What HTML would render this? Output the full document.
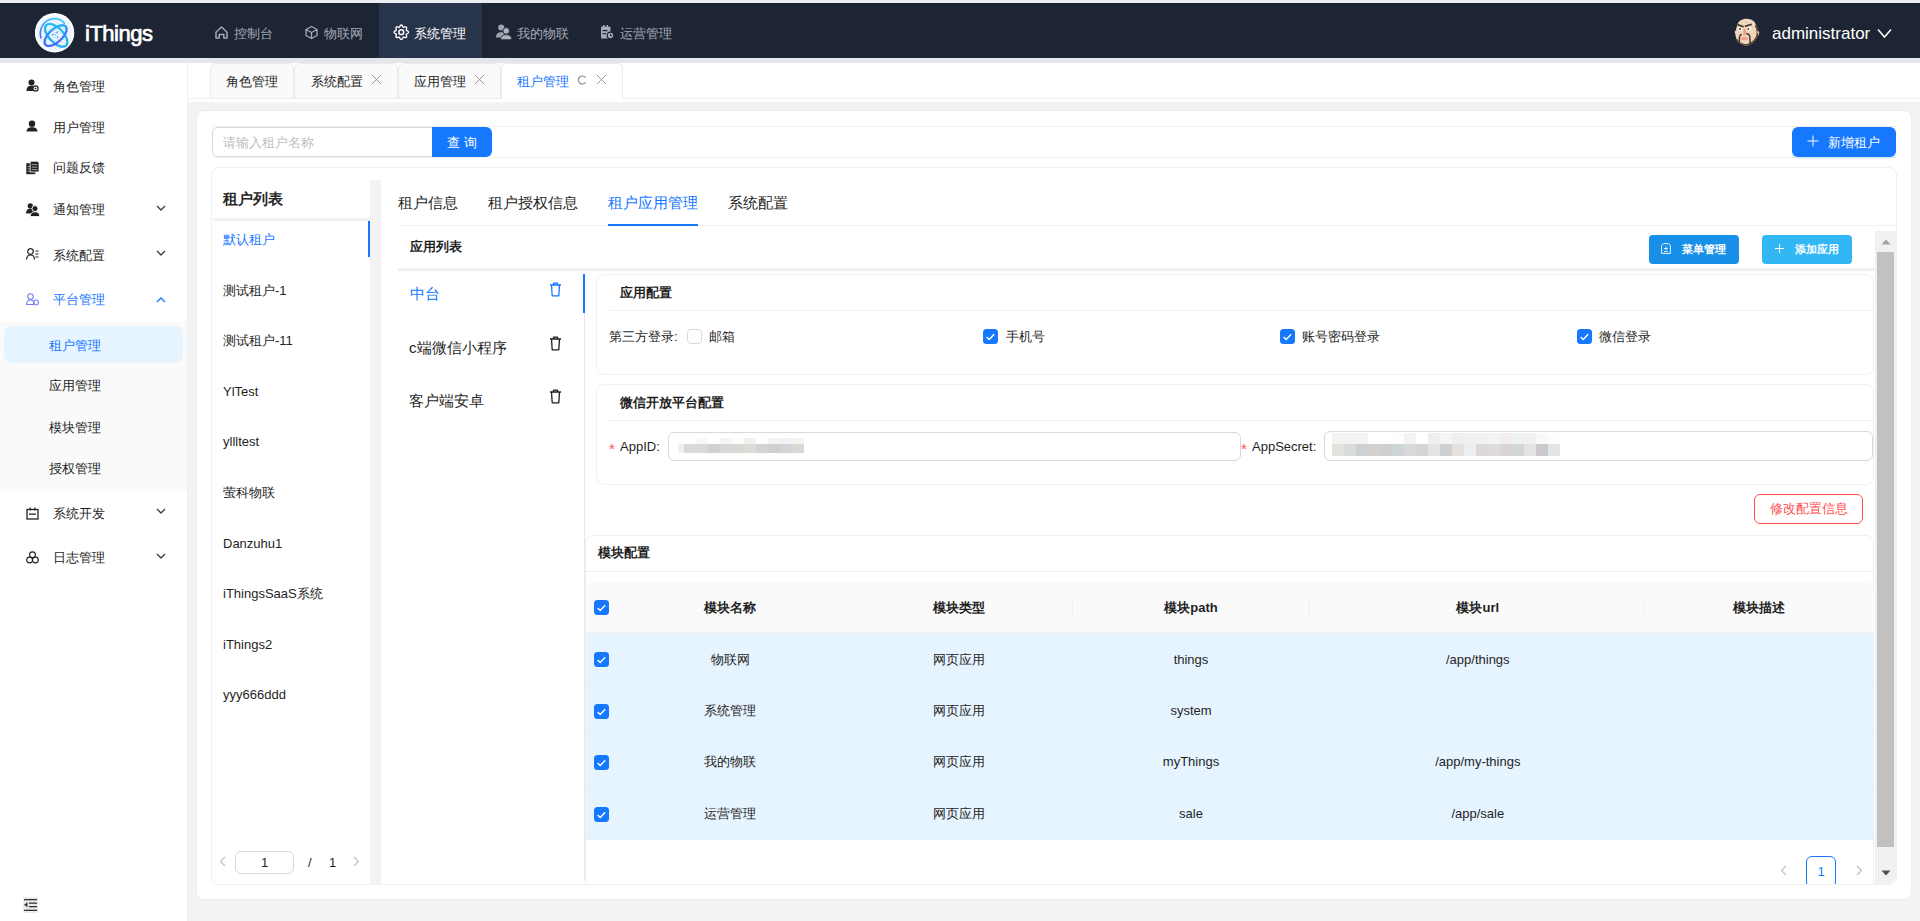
<!DOCTYPE html>
<html><head><meta charset="utf-8">
<style>
*{box-sizing:border-box;margin:0;padding:0}
html,body{width:1920px;height:921px;overflow:hidden}
body{position:relative;background:#f3f3f3;font-family:"Liberation Sans",sans-serif;font-size:13px;color:#1f1f1f}
.a{position:absolute}
.t{position:absolute;white-space:nowrap;line-height:1}
svg{display:block}
</style></head><body>
<div class="a" style="left:0px;top:0px;width:1920px;height:3px;background:#eceef1"></div>
<div class="a" style="left:0px;top:3px;width:1920px;height:55px;background:#1d2433"></div>
<div class="a" style="left:379px;top:3px;width:103px;height:55px;background:#28344a"></div>
<svg class="a" style="left:35px;top:13px" width="40" height="40" viewBox="0 0 40 40"><defs><linearGradient id="lgA" x1="0" y1="0" x2="1" y2="1"><stop offset="0" stop-color="#22c4f6"/><stop offset="1" stop-color="#1aa8f0"/></linearGradient>
<linearGradient id="lgB" x1="0" y1="1" x2="1" y2="0"><stop offset="0" stop-color="#4b55ff"/><stop offset="0.6" stop-color="#2f8bff"/><stop offset="1" stop-color="#1cc2f5"/></linearGradient>
<linearGradient id="lgC" x1="0" y1="1" x2="0.7" y2="0"><stop offset="0" stop-color="#5a5cf8"/><stop offset="1" stop-color="#2ec8f7"/></linearGradient>
<pattern id="hatch" width="40" height="2.4" patternUnits="userSpaceOnUse" patternTransform="rotate(28)"><rect width="40" height="1.1" fill="#b9d5f3"/></pattern>
<radialGradient id="rm"><stop offset="0" stop-color="#fff" stop-opacity="1"/><stop offset="0.85" stop-color="#fff" stop-opacity="0.6"/><stop offset="1" stop-color="#fff" stop-opacity="0"/></radialGradient>
<mask id="mk"><circle cx="19.6" cy="19.8" r="19" fill="url(#rm)"/></mask></defs>
<circle cx="19.6" cy="19.8" r="19.7" fill="#fff"/>
<circle cx="19.6" cy="19.8" r="19" fill="url(#hatch)" mask="url(#mk)" opacity="1"/>
<path d="M6 25 C3.5 17 8 7 18.5 5.8 C23.5 5.3 27.5 7.5 29.5 10.5" fill="none" stroke="url(#lgC)" stroke-width="1.5" stroke-linecap="round"/>
<ellipse cx="21.2" cy="22.3" rx="14.2" ry="7.2" fill="none" stroke="url(#lgA)" stroke-width="2.3" transform="rotate(46 21.2 22.3)"/>
<ellipse cx="20.6" cy="22.6" rx="13.6" ry="6.6" fill="none" stroke="url(#lgB)" stroke-width="2.3" transform="rotate(-42 20.6 22.6)"/>
<circle cx="17.8" cy="21.6" r="0.9" fill="#2fb0f5"/><circle cx="22.2" cy="19.4" r="0.9" fill="#2fb0f5"/><circle cx="22.6" cy="23.8" r="0.9" fill="#2fb0f5"/><circle cx="20.3" cy="22" r="0.8" fill="#5ac0f5"/></svg>
<div class="t" style="left:85px;top:23px;font-size:22px;font-weight:normal;color:#fff;letter-spacing:-0.5px;-webkit-text-stroke:0.7px #fff">iThings</div>
<svg class="a" style="left:214px;top:25px" width="15" height="15" viewBox="0 0 15 15"><path d="M2 7.2 L7.5 2 L13 7.2 V13 H9.8 V9.5 H5.2 V13 H2 Z" fill="none" stroke="#a3aab6" stroke-width="1.5" stroke-linejoin="round"/></svg>
<div class="t" style="left:234px;top:26.5px;font-size:13px;color:#a3aab6;font-weight:normal;">控制台</div>
<svg class="a" style="left:304px;top:25px" width="15" height="15" viewBox="0 0 15 15"><path d="M7.5 1.5 L13 4.5 V10.5 L7.5 13.5 L2 10.5 V4.5 Z M2 4.5 L7.5 7.5 L13 4.5 M7.5 7.5 V13.5" fill="none" stroke="#a3aab6" stroke-width="1.3" stroke-linejoin="round"/></svg>
<div class="t" style="left:324px;top:26.5px;font-size:13px;color:#a3aab6;font-weight:normal;">物联网</div>
<svg class="a" style="left:393px;top:24px" width="17" height="17" viewBox="0 0 17 17"><path d="M15.50 8.20 L15.45 8.48 L15.31 8.75 L15.08 9.00 L14.80 9.23 L14.48 9.43 L14.16 9.61 L13.85 9.77 L13.60 9.92 L13.41 10.08 L13.29 10.27 L13.24 10.48 L13.26 10.73 L13.34 11.02 L13.43 11.35 L13.54 11.70 L13.62 12.07 L13.66 12.43 L13.64 12.76 L13.55 13.06 L13.39 13.29 L13.16 13.45 L12.86 13.54 L12.53 13.56 L12.17 13.52 L11.80 13.44 L11.45 13.33 L11.12 13.24 L10.83 13.16 L10.58 13.14 L10.37 13.19 L10.18 13.31 L10.02 13.50 L9.87 13.75 L9.71 14.06 L9.53 14.38 L9.33 14.70 L9.10 14.98 L8.85 15.21 L8.58 15.35 L8.30 15.40 L8.02 15.35 L7.75 15.21 L7.50 14.98 L7.27 14.70 L7.07 14.38 L6.89 14.06 L6.73 13.75 L6.58 13.50 L6.42 13.31 L6.23 13.19 L6.02 13.14 L5.77 13.16 L5.48 13.24 L5.15 13.33 L4.80 13.44 L4.43 13.52 L4.07 13.56 L3.74 13.54 L3.44 13.45 L3.21 13.29 L3.05 13.06 L2.96 12.76 L2.94 12.43 L2.98 12.07 L3.06 11.70 L3.17 11.35 L3.26 11.02 L3.34 10.73 L3.36 10.48 L3.31 10.27 L3.19 10.08 L3.00 9.92 L2.75 9.77 L2.44 9.61 L2.12 9.43 L1.80 9.23 L1.52 9.00 L1.29 8.75 L1.15 8.48 L1.10 8.20 L1.15 7.92 L1.29 7.65 L1.52 7.40 L1.80 7.17 L2.12 6.97 L2.44 6.79 L2.75 6.63 L3.00 6.48 L3.19 6.32 L3.31 6.13 L3.36 5.92 L3.34 5.67 L3.26 5.38 L3.17 5.05 L3.06 4.70 L2.98 4.33 L2.94 3.97 L2.96 3.64 L3.05 3.34 L3.21 3.11 L3.44 2.95 L3.74 2.86 L4.07 2.84 L4.43 2.88 L4.80 2.96 L5.15 3.07 L5.48 3.16 L5.77 3.24 L6.02 3.26 L6.23 3.21 L6.42 3.09 L6.58 2.90 L6.73 2.65 L6.89 2.34 L7.07 2.02 L7.27 1.70 L7.50 1.42 L7.75 1.19 L8.02 1.05 L8.30 1.00 L8.58 1.05 L8.85 1.19 L9.10 1.42 L9.33 1.70 L9.53 2.02 L9.71 2.34 L9.87 2.65 L10.02 2.90 L10.18 3.09 L10.37 3.21 L10.58 3.26 L10.83 3.24 L11.12 3.16 L11.45 3.07 L11.80 2.96 L12.17 2.88 L12.53 2.84 L12.86 2.86 L13.16 2.95 L13.39 3.11 L13.55 3.34 L13.64 3.64 L13.66 3.97 L13.62 4.33 L13.54 4.70 L13.43 5.05 L13.34 5.38 L13.26 5.67 L13.24 5.92 L13.29 6.13 L13.41 6.32 L13.60 6.48 L13.85 6.63 L14.16 6.79 L14.48 6.97 L14.80 7.17 L15.08 7.40 L15.31 7.65 L15.45 7.92 Z" fill="none" stroke="#fff" stroke-width="1.4" stroke-linejoin="round"/><circle cx="8.3" cy="8.2" r="2.4" fill="none" stroke="#fff" stroke-width="1.5"/></svg>
<div class="t" style="left:414px;top:26.5px;font-size:13px;color:#fff;font-weight:normal;">系统管理</div>
<svg class="a" style="left:495px;top:23px" width="17" height="18" viewBox="0 0 17 18"><circle cx="6.2" cy="4.5" r="3" fill="#9ea5b0"/><path d="M1 14.5 C1 10.8 3 9.2 6.2 9.2 C8 9.2 9.2 9.8 9.8 10.8 L9 14.5 Z" fill="#9ea5b0"/><circle cx="11.2" cy="7.9" r="3.3" fill="#aeb4be" stroke="#1d2433" stroke-width="0.9"/><path d="M5.6 16.8 C5.6 13.2 7.8 11.6 11.2 11.6 C14.6 11.6 16.8 13.2 16.8 16.8 Z" fill="#aeb4be" stroke="#1d2433" stroke-width="0.9"/></svg>
<div class="t" style="left:517px;top:26.5px;font-size:13px;color:#a3aab6;font-weight:normal;">我的物联</div>
<svg class="a" style="left:600px;top:24px" width="14" height="16" viewBox="0 0 14 16"><rect x="1" y="2.5" width="9.5" height="12" rx="1" fill="#a3aab6"/><rect x="3" y="1" width="1.5" height="3" fill="#a3aab6"/><rect x="6.5" y="1" width="1.5" height="3" fill="#a3aab6"/><rect x="2.5" y="6" width="5" height="1.2" fill="#1d2433"/><rect x="2.5" y="9" width="3.5" height="1.2" fill="#1d2433"/><circle cx="10.5" cy="11.5" r="3.3" fill="#a3aab6" stroke="#1d2433" stroke-width="1.2"/><path d="M10.5 9.8 V11.7 H12" stroke="#1d2433" stroke-width="1" fill="none"/></svg>
<div class="t" style="left:620px;top:26.5px;font-size:13px;color:#a3aab6;font-weight:normal;">运营管理</div>
<svg class="a" style="left:1730px;top:14px" width="36" height="36" viewBox="0 0 36 36"><path d="M16.4 4.7 C12 4.7 8.5 7 7.8 9.8 C6.8 12 6.3 14 5.9 16.4 C4.6 16.8 4.4 18.6 5.2 19.6 C5.6 22 6 24 6.5 25.6 C8 28 10 29.6 12 30.2 C13.5 31.2 15 31.8 16.4 31.8 C18.5 31.5 20.5 30.6 22 29.5 C24.5 27.5 26.5 25 27.3 22.5 C28.6 21.6 29.6 19.6 29.1 17.8 C28.6 16.8 27.8 16.6 27.2 16.8 C26.8 13.5 26 10.5 24.6 8 C22.6 5.6 19.6 4.7 16.4 4.7 Z" fill="#efd5bb"/>
<path d="M6.3 25.2 C8 28.6 10.5 29.8 12.5 30.3 C14.5 31 16.4 31 18 30.6 C21 30 24.5 27.5 27.3 22" fill="none" stroke="#5a4634" stroke-width="1.7"/>
<path d="M25.2 11.8 C26.8 12.8 27.3 14.5 27.3 16.8 L27.3 23" fill="none" stroke="#5a4634" stroke-width="1.8"/>
<path d="M8.2 10.9 L12.9 12.6 M15.6 12.2 L21.1 10.5" stroke="#4a3a2b" stroke-width="1.8" stroke-linecap="round"/>
<circle cx="10.4" cy="15" r="2.1" fill="#fff"/><circle cx="18.8" cy="15" r="2.1" fill="#fff"/>
<circle cx="10" cy="15" r="1" fill="#4b3b35"/><circle cx="18.4" cy="14.9" r="1" fill="#4b3b35"/>
<path d="M13.4 15 C14 14.5 15.3 14.5 15.8 15.2 L16.4 20.5 C16 21.6 13.8 21.6 13.2 20.5 Z" fill="#ee9f86"/>
<ellipse cx="14.4" cy="24.6" rx="3.3" ry="1.7" fill="#ef9e88"/>
<path d="M11.8 20.2 C10.5 20.6 9.7 21.6 9.5 23 L9.3 28.2 M16.4 19.6 C18.5 19.8 19.6 21 19.8 23 L20.3 31.5" fill="none" stroke="#4a3a2b" stroke-width="1.5"/>
<circle cx="27.2" cy="18.2" r="1" fill="#e9a58e"/></svg>
<div class="t" style="left:1772px;top:25px;font-size:17px;color:#fff">administrator</div>
<svg class="a" style="left:1877px;top:28px" width="15" height="11" viewBox="0 0 15 11"><path d="M1 1.5 L7.5 9 L14 1.5" fill="none" stroke="#fff" stroke-width="1.5"/></svg>
<div class="a" style="left:0px;top:58px;width:1920px;height:5px;background:#e3e6ea"></div>
<div class="a" style="left:0px;top:63px;width:187px;height:858px;background:#fff"></div>
<div class="a" style="left:187px;top:63px;width:1px;height:858px;background:#f0f0f0"></div>
<div class="a" style="left:0px;top:322px;width:187px;height:169px;background:#fafafa"></div>
<div class="a" style="left:4px;top:326px;width:179px;height:37px;background:#e6f4ff;border-radius:8px"></div>
<svg class="a" style="left:26px;top:79px" width="14" height="15" viewBox="0 0 14 15"><circle cx="5.5" cy="3.5" r="3" fill="#222"/><path d="M0.5 12 C0.5 8 2.5 6.8 5.5 6.8 C7 6.8 8 7.2 8.6 7.8 L8 12 Z" fill="#222"/><circle cx="9.5" cy="9.5" r="2.6" fill="#fff" stroke="#222" stroke-width="1.2"/><circle cx="9.5" cy="9.5" r="0.9" fill="#222"/></svg>
<div class="t" style="left:53px;top:79.5px;font-size:13px;color:#1f1f1f;font-weight:normal;">角色管理</div>
<svg class="a" style="left:26px;top:120px" width="14" height="15" viewBox="0 0 14 15"><circle cx="6" cy="3.8" r="3.2" fill="#222"/><path d="M0.5 11.5 C0.8 8 3 7.2 6 7.2 C9 7.2 11.2 8 11.5 11.5 Z" fill="#222"/></svg>
<div class="t" style="left:53px;top:120.5px;font-size:13px;color:#1f1f1f;font-weight:normal;">用户管理</div>
<svg class="a" style="left:26px;top:161px" width="14" height="15" viewBox="0 0 14 15"><rect x="0.3" y="2.2" width="9" height="11" fill="#222"/><rect x="1.5" y="5" width="5" height="0.9" fill="#999"/><rect x="1.5" y="7.5" width="5" height="0.9" fill="#999"/><rect x="1.5" y="10" width="5" height="0.9" fill="#999"/><path d="M4.2 0.2 H11.5 L13 1.7 V11 H4.2 Z" fill="#222" stroke="#fff" stroke-width="0.8"/><rect x="5.8" y="3.2" width="5.5" height="0.9" fill="#aaa"/><rect x="5.8" y="5.7" width="5.5" height="0.9" fill="#aaa"/><rect x="5.8" y="8.2" width="5.5" height="0.9" fill="#aaa"/></svg>
<div class="t" style="left:53px;top:161.3px;font-size:13px;color:#1f1f1f;font-weight:normal;">问题反馈</div>
<svg class="a" style="left:26px;top:203px" width="14" height="15" viewBox="0 0 14 15"><circle cx="4.3" cy="2.9" r="2.6" fill="#222"/><path d="M0 10.5 C0 7 2 5.8 4.3 5.8 C6.5 5.8 8.5 7 8.5 10.5 Z" fill="#222"/><circle cx="9" cy="5.6" r="3" fill="#222" stroke="#fff" stroke-width="0.9"/><path d="M4.3 13.6 C4.3 10 6.5 8.8 9 8.8 C11.5 8.8 13.6 10 13.6 13.6 Z" fill="#222" stroke="#fff" stroke-width="0.9"/></svg>
<div class="t" style="left:53px;top:203.3px;font-size:13px;color:#1f1f1f;font-weight:normal;">通知管理</div>
<svg class="a" style="left:26px;top:248px" width="14" height="15" viewBox="0 0 14 15"><circle cx="4.5" cy="3.5" r="2.8" fill="none" stroke="#222" stroke-width="1.2"/><path d="M0.6 11.5 C0.6 8 2.5 7 4.5 7 C6.5 7 8.4 8 8.4 11.5" fill="none" stroke="#222" stroke-width="1.2"/><path d="M9.5 3 H12.5 M9.5 6 H12.5 M9.5 9 H12.5" stroke="#222" stroke-width="1.1"/></svg>
<div class="t" style="left:53px;top:248.5px;font-size:13px;color:#1f1f1f;font-weight:normal;">系统配置</div>
<svg class="a" style="left:26px;top:293px" width="14" height="15" viewBox="0 0 14 15"><circle cx="4.5" cy="3.5" r="2.8" fill="none" stroke="#7a7cf4" stroke-width="1.1"/><path d="M0.6 11.5 C0.6 8 2.5 7 4.5 7 C6.5 7 8.4 8 8.4 11.5 Z" fill="none" stroke="#7a7cf4" stroke-width="1.1"/><circle cx="10" cy="9.5" r="2.5" fill="none" stroke="#7a7cf4" stroke-width="1.1"/></svg>
<div class="t" style="left:53px;top:293.1px;font-size:13px;color:#1677ff;font-weight:normal;">平台管理</div>
<svg class="a" style="left:155.5px;top:204.8px" width="10" height="6" viewBox="0 0 10 6"><path d="M1 1 L5 5 L9 1" fill="none" stroke="#3a3a3a" stroke-width="1.3"/></svg>
<svg class="a" style="left:155.5px;top:250px" width="10" height="6" viewBox="0 0 10 6"><path d="M1 1 L5 5 L9 1" fill="none" stroke="#3a3a3a" stroke-width="1.3"/></svg>
<svg class="a" style="left:155.5px;top:296.6px" width="10" height="6" viewBox="0 0 10 6"><path d="M1 5 L5 1 L9 5" fill="none" stroke="#1677ff" stroke-width="1.3"/></svg>
<div class="t" style="left:49px;top:338.8px;font-size:13px;color:#1677ff;font-weight:normal;">租户管理</div>
<div class="t" style="left:49px;top:379.1px;font-size:13px;color:#1f1f1f;font-weight:normal;">应用管理</div>
<div class="t" style="left:49px;top:420.6px;font-size:13px;color:#1f1f1f;font-weight:normal;">模块管理</div>
<div class="t" style="left:49px;top:461.5px;font-size:13px;color:#1f1f1f;font-weight:normal;">授权管理</div>
<svg class="a" style="left:26px;top:507px" width="13" height="13" viewBox="0 0 13 13"><rect x="1" y="2.5" width="11" height="9.5" fill="none" stroke="#222" stroke-width="1.3"/><rect x="3.5" y="0.5" width="1.3" height="3" fill="#222"/><rect x="8.2" y="0.5" width="1.3" height="3" fill="#222"/><rect x="3" y="6.5" width="7" height="1.3" fill="#222"/></svg>
<div class="t" style="left:53px;top:506.5px;font-size:13px;color:#1f1f1f;font-weight:normal;">系统开发</div>
<svg class="a" style="left:155.5px;top:508px" width="10" height="6" viewBox="0 0 10 6"><path d="M1 1 L5 5 L9 1" fill="none" stroke="#3a3a3a" stroke-width="1.3"/></svg>
<svg class="a" style="left:26px;top:551px" width="13" height="13" viewBox="0 0 13 13"><circle cx="6.5" cy="3.8" r="2.9" fill="none" stroke="#222" stroke-width="1.1"/><circle cx="3.6" cy="9" r="2.9" fill="none" stroke="#222" stroke-width="1.1"/><circle cx="9.4" cy="9" r="2.9" fill="none" stroke="#222" stroke-width="1.1"/></svg>
<div class="t" style="left:53px;top:551.3px;font-size:13px;color:#1f1f1f;font-weight:normal;">日志管理</div>
<svg class="a" style="left:155.5px;top:552.8px" width="10" height="6" viewBox="0 0 10 6"><path d="M1 1 L5 5 L9 1" fill="none" stroke="#3a3a3a" stroke-width="1.3"/></svg>
<svg class="a" style="left:23px;top:897px" width="15" height="16" viewBox="0 0 15 16"><rect width="15" height="16" fill="#e8eaed"/><rect x="1" y="2" width="13" height="1.3" fill="#333"/><rect x="6" y="5.5" width="8" height="1.3" fill="#333"/><rect x="6" y="9" width="8" height="1.3" fill="#333"/><rect x="1" y="12.7" width="13" height="1.3" fill="#333"/><path d="M1 7.8 L4.5 5.3 V10.3 Z" fill="#333"/></svg>
<div class="a" style="left:188px;top:63px;width:1732px;height:39px;background:#fff"></div>
<div class="a" style="left:188px;top:98px;width:1732px;height:1px;background:#f0f0f0"></div>
<div class="a" style="left:210px;top:63px;width:84px;height:36px;background:#fafafa;border:1px solid #ebebeb;border-radius:6px 6px 0 0;"></div>
<div class="t" style="left:226px;top:74.5px;font-size:13px;color:#1f1f1f;font-weight:normal;">角色管理</div>
<div class="a" style="left:294px;top:63px;width:104px;height:36px;background:#fafafa;border:1px solid #ebebeb;border-radius:6px 6px 0 0;"></div>
<div class="t" style="left:311px;top:74.5px;font-size:13px;color:#1f1f1f;font-weight:normal;">系统配置</div>
<svg class="a" style="left:371px;top:74px" width="11" height="11" viewBox="0 0 11 11"><path d="M0.8 0.8 L10.2 10.2 M10.2 0.8 L0.8 10.2" stroke="#9a9a9a" stroke-width="1"/></svg>
<div class="a" style="left:398px;top:63px;width:103px;height:36px;background:#fafafa;border:1px solid #ebebeb;border-radius:6px 6px 0 0;"></div>
<div class="t" style="left:414px;top:74.5px;font-size:13px;color:#1f1f1f;font-weight:normal;">应用管理</div>
<svg class="a" style="left:474px;top:74px" width="11" height="11" viewBox="0 0 11 11"><path d="M0.8 0.8 L10.2 10.2 M10.2 0.8 L0.8 10.2" stroke="#9a9a9a" stroke-width="1"/></svg>
<div class="a" style="left:501px;top:63px;width:122px;height:36px;background:#fff;border:1px solid #ebebeb;border-radius:6px 6px 0 0;border-bottom-color:#fff;"></div>
<div class="t" style="left:517px;top:74.5px;font-size:13px;color:#1677ff;font-weight:normal;">租户管理</div>
<svg class="a" style="left:596px;top:74px" width="11" height="11" viewBox="0 0 11 11"><path d="M0.8 0.8 L10.2 10.2 M10.2 0.8 L0.8 10.2" stroke="#9a9a9a" stroke-width="1"/></svg>
<svg class="a" style="left:577px;top:75px" width="10" height="10" viewBox="0 0 10 10"><path d="M8.6 2.6 A4 4 0 1 0 8.6 7.4" fill="none" stroke="#8c8c8c" stroke-width="1.2"/></svg>
<div class="a" style="left:196px;top:110px;width:1716px;height:790px;background:#fff;border-radius:8px;border:1px solid #ededed"></div>
<div class="a" style="left:212px;top:126px;width:1684px;height:32px;border-top:1px solid #f0f0f0;border-bottom:1px solid #f0f0f0"></div>
<div class="a" style="left:212px;top:127px;width:221px;height:30px;background:#fff;border:1px solid #d9d9d9;border-radius:6px 0 0 6px"></div>
<div class="t" style="left:223px;top:135.5px;font-size:13px;color:#bfbfbf;font-weight:normal;">请输入租户名称</div>
<div class="a" style="left:432px;top:127px;width:60px;height:30px;background:#1677ff;border-radius:0 6px 6px 0"></div>
<div class="t" style="left:447px;top:135.8px;font-size:13px;color:#fff;font-weight:normal;">查</div>
<div class="t" style="left:464px;top:135.8px;font-size:13px;color:#fff;font-weight:normal;">询</div>
<div class="a" style="left:1792px;top:127px;width:104px;height:30px;background:#1677ff;border-radius:6px;box-shadow:0 2px 0 rgba(5,145,255,0.1)"></div>
<svg class="a" style="left:1807px;top:135px" width="12" height="12" viewBox="0 0 12 12"><path d="M6 0.5 V11.5 M0.5 6 H11.5" stroke="#fff" stroke-width="1"/></svg>
<div class="t" style="left:1828px;top:135.5px;font-size:13px;color:#fff;font-weight:normal;">新增租户</div>
<div class="a" style="left:211px;top:167px;width:1686px;height:718px;border:1px solid #f0f0f0;border-radius:8px"></div>
<div class="t" style="left:223px;top:191.2px;font-size:15px;color:#262626;font-weight:bold;">租户列表</div>
<div class="a" style="left:213px;top:218px;width:157px;height:3px;background:#f0f0f0"></div>
<div class="t" style="left:223px;top:232.9px;font-size:13px;color:#1677ff;font-weight:normal;">默认租户</div>
<div class="t" style="left:223px;top:283.5px;font-size:13px;color:#1f1f1f;font-weight:normal;">测试租户-1</div>
<div class="t" style="left:223px;top:334.1px;font-size:13px;color:#1f1f1f;font-weight:normal;">测试租户-11</div>
<div class="t" style="left:223px;top:384.7px;font-size:13px;color:#1f1f1f;font-weight:normal;">YlTest</div>
<div class="t" style="left:223px;top:435.3px;font-size:13px;color:#1f1f1f;font-weight:normal;">yllltest</div>
<div class="t" style="left:223px;top:485.9px;font-size:13px;color:#1f1f1f;font-weight:normal;">萤科物联</div>
<div class="t" style="left:223px;top:536.5px;font-size:13px;color:#1f1f1f;font-weight:normal;">Danzuhu1</div>
<div class="t" style="left:223px;top:587.1px;font-size:13px;color:#1f1f1f;font-weight:normal;">iThingsSaaS系统</div>
<div class="t" style="left:223px;top:637.7px;font-size:13px;color:#1f1f1f;font-weight:normal;">iThings2</div>
<div class="t" style="left:223px;top:688.3px;font-size:13px;color:#1f1f1f;font-weight:normal;">yyy666ddd</div>
<div class="a" style="left:368px;top:221px;width:2px;height:36px;background:#1677ff"></div>
<div class="a" style="left:370px;top:180px;width:11px;height:704px;background:#f3f3f3"></div>
<svg class="a" style="left:219px;top:856px" width="8" height="11" viewBox="0 0 8 11"><path d="M6 1 L1.5 5.5 L6 10" fill="none" stroke="#bfbfbf" stroke-width="1.1"/></svg>
<div class="a" style="left:235px;top:851px;width:59px;height:23px;border:1px solid #d9d9d9;border-radius:6px"></div>
<div class="t" style="left:114.5px;width:300px;text-align:center;top:855.5px;font-size:13px;color:#1f1f1f;font-weight:normal;">1</div>
<div class="t" style="left:308px;top:855.5px;font-size:13px;color:#1f1f1f;font-weight:normal;">/</div>
<div class="t" style="left:329px;top:855.5px;font-size:13px;color:#1f1f1f;font-weight:normal;">1</div>
<svg class="a" style="left:352px;top:856px" width="8" height="11" viewBox="0 0 8 11"><path d="M2 1 L6.5 5.5 L2 10" fill="none" stroke="#bfbfbf" stroke-width="1.1"/></svg>
<div class="t" style="left:398px;top:195.1px;font-size:15px;color:#1f1f1f;font-weight:normal;">租户信息</div>
<div class="t" style="left:487.5px;top:195.1px;font-size:15px;color:#1f1f1f;font-weight:normal;">租户授权信息</div>
<div class="t" style="left:608px;top:195.1px;font-size:15px;color:#1677ff;font-weight:normal;">租户应用管理</div>
<div class="t" style="left:727.7px;top:195.1px;font-size:15px;color:#1f1f1f;font-weight:normal;">系统配置</div>
<div class="a" style="left:398px;top:225px;width:1498px;height:1px;background:#f0f0f0"></div>
<div class="a" style="left:608px;top:224px;width:90px;height:2px;background:#1677ff"></div>
<div class="a" style="left:398px;top:231px;width:1498px;height:653px;overflow:hidden;border-radius:0 0 8px 0">
<div class="t" style="left:11.5px;top:9.2px;font-size:13px;color:#1f1f1f;font-weight:bold;">应用列表</div>
<div class="a" style="left:1251px;top:4px;width:90px;height:29px;background:#1890e8;border-radius:4px"></div>
<svg class="a" style="left:1263px;top:12px" width="10" height="11" viewBox="0 0 10 11"><path d="M0.6 2.5 L2.5 0.6 H7.5 L9.4 2.5 V10.4 H0.6 Z" fill="none" stroke="#e8f2fc" stroke-width="1"/><path d="M3 5.5 H7 M5 3.5 V7.5 M3 8.6 H7" stroke="#e8f2fc" stroke-width="0.9"/></svg>
<div class="t" style="left:1284px;top:12.5px;font-size:11px;color:#fff;font-weight:bold;">菜单管理</div>
<div class="a" style="left:1364px;top:4px;width:90px;height:29px;background:#33b6f4;border-radius:4px"></div>
<svg class="a" style="left:1377px;top:13px" width="9" height="9" viewBox="0 0 9 9"><path d="M4.5 0 V9 M0 4.5 H9" stroke="#fff" stroke-width="1"/></svg>
<div class="t" style="left:1397px;top:12.5px;font-size:11px;color:#fff;font-weight:bold;">添加应用</div>
<div class="a" style="left:0px;top:37px;width:1477px;height:3px;background:#f0f0f0"></div>
<div class="t" style="left:12px;top:55.2px;font-size:15px;color:#1677ff;font-weight:normal;">中台</div>
<svg class="a" style="left:151px;top:51px" width="13" height="15" viewBox="0 0 13 15"><path d="M1 3 H12 M4.5 3 V1.2 H8.5 V3 M2.5 3 L3.2 13.8 H9.8 L10.5 3" fill="none" stroke="#1677ff" stroke-width="1.3" stroke-linejoin="round"/></svg>
<div class="t" style="left:11px;top:109.2px;font-size:15px;color:#1f1f1f;font-weight:normal;">c端微信小程序</div>
<svg class="a" style="left:151px;top:105px" width="13" height="15" viewBox="0 0 13 15"><path d="M1 3 H12 M4.5 3 V1.2 H8.5 V3 M2.5 3 L3.2 13.8 H9.8 L10.5 3" fill="none" stroke="#1f1f1f" stroke-width="1.3" stroke-linejoin="round"/></svg>
<div class="t" style="left:11px;top:161.5px;font-size:15px;color:#1f1f1f;font-weight:normal;">客户端安卓</div>
<svg class="a" style="left:151px;top:158px" width="13" height="15" viewBox="0 0 13 15"><path d="M1 3 H12 M4.5 3 V1.2 H8.5 V3 M2.5 3 L3.2 13.8 H9.8 L10.5 3" fill="none" stroke="#1f1f1f" stroke-width="1.3" stroke-linejoin="round"/></svg>
<div class="a" style="left:186px;top:43px;width:1px;height:606px;background:#e8e8e8"></div>
<div class="a" style="left:185px;top:43px;width:2px;height:39px;background:#1677ff"></div>
<div class="a" style="left:198px;top:43px;width:1278px;height:101px;border:1px solid #f0f0f0;border-radius:8px"></div>
<div class="t" style="left:222px;top:54.5px;font-size:13px;color:#1f1f1f;font-weight:bold;">应用配置</div>
<div class="a" style="left:211px;top:79px;width:1265px;height:1px;background:#f0f0f0"></div>
<div class="t" style="left:211px;top:98.5px;font-size:13px;color:#1f1f1f;font-weight:normal;">第三方登录:</div>
<svg class="a" style="left:289px;top:98.0px" width="15" height="15" viewBox="0 0 15 15"><rect x="0.5" y="0.5" width="14" height="14" rx="3.5" fill="#fff" stroke="#d9d9d9"/></svg>
<div class="t" style="left:311px;top:98.5px;font-size:13px;color:#1f1f1f;font-weight:normal;">邮箱</div>
<svg class="a" style="left:585px;top:98.0px" width="15" height="15" viewBox="0 0 15 15"><rect x="0" y="0" width="15" height="15" rx="3.5" fill="#1677ff"/><path d="M3.6 7.9 L6.2 10.6 L11.2 5.2" fill="none" stroke="#fff" stroke-width="1.4"/></svg>
<div class="t" style="left:608px;top:98.5px;font-size:13px;color:#1f1f1f;font-weight:normal;">手机号</div>
<svg class="a" style="left:882px;top:98.0px" width="15" height="15" viewBox="0 0 15 15"><rect x="0" y="0" width="15" height="15" rx="3.5" fill="#1677ff"/><path d="M3.6 7.9 L6.2 10.6 L11.2 5.2" fill="none" stroke="#fff" stroke-width="1.4"/></svg>
<div class="t" style="left:904px;top:98.5px;font-size:13px;color:#1f1f1f;font-weight:normal;">账号密码登录</div>
<svg class="a" style="left:1179px;top:98.0px" width="15" height="15" viewBox="0 0 15 15"><rect x="0" y="0" width="15" height="15" rx="3.5" fill="#1677ff"/><path d="M3.6 7.9 L6.2 10.6 L11.2 5.2" fill="none" stroke="#fff" stroke-width="1.4"/></svg>
<div class="t" style="left:1201px;top:98.5px;font-size:13px;color:#1f1f1f;font-weight:normal;">微信登录</div>
<div class="a" style="left:198px;top:153px;width:1278px;height:101px;border:1px solid #f0f0f0;border-radius:8px"></div>
<div class="t" style="left:222px;top:164.5px;font-size:13px;color:#1f1f1f;font-weight:bold;">微信开放平台配置</div>
<div class="a" style="left:211px;top:189px;width:1265px;height:1px;background:#f0f0f0"></div>
<div class="t" style="left:211px;top:209.5px;font-size:15px;color:#ff4d4f;font-weight:normal;">*</div>
<div class="t" style="left:222px;top:208.5px;font-size:13px;color:#1f1f1f;font-weight:normal;">AppID:</div>
<div class="a" style="left:270px;top:201px;width:573px;height:29px;border:1px solid #d9d9d9;border-radius:6px"></div>
<div class="a" style="left:280px;top:207px;width:6px;height:6px;background:#fdfdfd"></div>
<div class="a" style="left:280px;top:213px;width:6px;height:9px;background:#efefef"></div>
<div class="a" style="left:286px;top:207px;width:12px;height:6px;background:#fefefc"></div>
<div class="a" style="left:286px;top:213px;width:12px;height:9px;background:#d8dad9"></div>
<div class="a" style="left:298px;top:207px;width:12px;height:6px;background:#f7f7f7"></div>
<div class="a" style="left:298px;top:213px;width:12px;height:9px;background:#d9d9d9"></div>
<div class="a" style="left:310px;top:207px;width:12px;height:6px;background:#fff"></div>
<div class="a" style="left:310px;top:213px;width:12px;height:9px;background:#d1cfd2"></div>
<div class="a" style="left:322px;top:207px;width:12px;height:6px;background:#f5f5f5"></div>
<div class="a" style="left:322px;top:213px;width:12px;height:9px;background:#d5d7da"></div>
<div class="a" style="left:334px;top:207px;width:12px;height:6px;background:#fafbfa"></div>
<div class="a" style="left:334px;top:213px;width:12px;height:9px;background:#d9d8d6"></div>
<div class="a" style="left:346px;top:207px;width:12px;height:6px;background:#f3f1ee"></div>
<div class="a" style="left:346px;top:213px;width:12px;height:9px;background:#dfdcd7"></div>
<div class="a" style="left:358px;top:207px;width:12px;height:6px;background:#fdfeff"></div>
<div class="a" style="left:358px;top:213px;width:12px;height:9px;background:#d2d3d5"></div>
<div class="a" style="left:370px;top:207px;width:12px;height:6px;background:#f5f5f5"></div>
<div class="a" style="left:370px;top:213px;width:12px;height:9px;background:#cfcfd1"></div>
<div class="a" style="left:382px;top:207px;width:12px;height:6px;background:#f0f2f4"></div>
<div class="a" style="left:382px;top:213px;width:12px;height:9px;background:#d2d4d6"></div>
<div class="a" style="left:394px;top:207px;width:12px;height:6px;background:#f4f3f0"></div>
<div class="a" style="left:394px;top:213px;width:12px;height:9px;background:#d9d8d5"></div>
<div class="t" style="left:843px;top:209.5px;font-size:15px;color:#ff4d4f;font-weight:normal;">*</div>
<div class="t" style="left:854px;top:208.5px;font-size:13px;color:#1f1f1f;font-weight:normal;">AppSecret:</div>
<div class="a" style="left:926px;top:200px;width:549px;height:30px;border:1px solid #d9d9d9;border-radius:6px"></div>
<div class="a" style="left:934px;top:202px;width:12px;height:11px;background:#f3f3f2"></div>
<div class="a" style="left:934px;top:213px;width:12px;height:12px;background:#e2e2de"></div>
<div class="a" style="left:946px;top:202px;width:12px;height:11px;background:#f3f3f1"></div>
<div class="a" style="left:946px;top:213px;width:12px;height:12px;background:#d9dcdb"></div>
<div class="a" style="left:958px;top:202px;width:12px;height:11px;background:#f2f4f6"></div>
<div class="a" style="left:958px;top:213px;width:12px;height:12px;background:#cdd1d3"></div>
<div class="a" style="left:970px;top:202px;width:12px;height:11px;background:#fff"></div>
<div class="a" style="left:970px;top:213px;width:12px;height:12px;background:#d3d1cf"></div>
<div class="a" style="left:982px;top:202px;width:12px;height:11px;background:#fff"></div>
<div class="a" style="left:982px;top:213px;width:12px;height:12px;background:#cfcfcf"></div>
<div class="a" style="left:994px;top:202px;width:12px;height:11px;background:#fefefc"></div>
<div class="a" style="left:994px;top:213px;width:12px;height:12px;background:#cdd5d6"></div>
<div class="a" style="left:1006px;top:202px;width:12px;height:11px;background:#f2f4f3"></div>
<div class="a" style="left:1006px;top:213px;width:12px;height:12px;background:#d9d9d9"></div>
<div class="a" style="left:1018px;top:202px;width:12px;height:11px;background:#fff"></div>
<div class="a" style="left:1018px;top:213px;width:12px;height:12px;background:#d4d4d2"></div>
<div class="a" style="left:1030px;top:202px;width:12px;height:11px;background:#efefef"></div>
<div class="a" style="left:1030px;top:213px;width:12px;height:12px;background:#e6e4e2"></div>
<div class="a" style="left:1042px;top:202px;width:12px;height:11px;background:#f5f5f3"></div>
<div class="a" style="left:1042px;top:213px;width:12px;height:12px;background:#ccd0d2"></div>
<div class="a" style="left:1054px;top:202px;width:12px;height:11px;background:#f1efee"></div>
<div class="a" style="left:1054px;top:213px;width:12px;height:12px;background:#e6e0df"></div>
<div class="a" style="left:1066px;top:202px;width:12px;height:11px;background:#f0f0f0"></div>
<div class="a" style="left:1066px;top:213px;width:12px;height:12px;background:#eceef0"></div>
<div class="a" style="left:1078px;top:202px;width:12px;height:11px;background:#eff2f1"></div>
<div class="a" style="left:1078px;top:213px;width:12px;height:12px;background:#ddd8dc"></div>
<div class="a" style="left:1090px;top:202px;width:12px;height:11px;background:#f4f4f4"></div>
<div class="a" style="left:1090px;top:213px;width:12px;height:12px;background:#dddcda"></div>
<div class="a" style="left:1102px;top:202px;width:12px;height:11px;background:#f2eeef"></div>
<div class="a" style="left:1102px;top:213px;width:12px;height:12px;background:#d9d4d6"></div>
<div class="a" style="left:1114px;top:202px;width:12px;height:11px;background:#eef2f1"></div>
<div class="a" style="left:1114px;top:213px;width:12px;height:12px;background:#d3d6d4"></div>
<div class="a" style="left:1126px;top:202px;width:12px;height:11px;background:#f1f1f1"></div>
<div class="a" style="left:1126px;top:213px;width:12px;height:12px;background:#e3e3e5"></div>
<div class="a" style="left:1138px;top:202px;width:12px;height:11px;background:#f9f9f9"></div>
<div class="a" style="left:1138px;top:213px;width:12px;height:12px;background:#cdc8cc"></div>
<div class="a" style="left:1150px;top:202px;width:12px;height:11px;background:#fcfcfc"></div>
<div class="a" style="left:1150px;top:213px;width:12px;height:12px;background:#e1e5e8"></div>
<div class="a" style="left:1356px;top:263px;width:109px;height:30px;border:1px solid #ff4d4f;border-radius:6px;background:#fff"></div>
<div class="t" style="left:1372px;top:270.8px;font-size:13px;color:#ff4d4f;font-weight:normal;">修改配置信息</div>
<div class="a" style="left:187px;top:304px;width:1289px;height:400px;border:1px solid #f0f0f0;border-radius:8px"></div>
<div class="t" style="left:199.70000000000005px;top:315.1px;font-size:13px;color:#1f1f1f;font-weight:bold;">模块配置</div>
<div class="a" style="left:188px;top:340px;width:1288px;height:1px;background:#f0f0f0"></div>
<div class="a" style="left:188px;top:351px;width:1288px;height:51px;background:#fafafa;border-radius:8px 8px 0 0;border-bottom:1px solid #f0f0f0"></div>
<svg class="a" style="left:196px;top:369.0px" width="15" height="15" viewBox="0 0 15 15"><rect x="0" y="0" width="15" height="15" rx="3.5" fill="#1677ff"/><path d="M3.6 7.9 L6.2 10.6 L11.2 5.2" fill="none" stroke="#fff" stroke-width="1.4"/></svg>
<div class="t" style="left:182px;width:300px;text-align:center;top:369.5px;font-size:13px;color:#1f1f1f;font-weight:bold">模块名称</div>
<div class="t" style="left:410.6px;width:300px;text-align:center;top:369.5px;font-size:13px;color:#1f1f1f;font-weight:bold">模块类型</div>
<div class="t" style="left:643px;width:300px;text-align:center;top:369.5px;font-size:13px;color:#1f1f1f;font-weight:bold">模块path</div>
<div class="t" style="left:929.8px;width:300px;text-align:center;top:369.5px;font-size:13px;color:#1f1f1f;font-weight:bold">模块url</div>
<div class="t" style="left:1211px;width:300px;text-align:center;top:369.5px;font-size:13px;color:#1f1f1f;font-weight:bold">模块描述</div>
<div class="a" style="left:674px;top:366px;width:1px;height:21px;background:#f0f0f0"></div>
<div class="a" style="left:911px;top:366px;width:1px;height:21px;background:#f0f0f0"></div>
<div class="a" style="left:1246px;top:366px;width:1px;height:21px;background:#f0f0f0"></div>
<div class="a" style="left:188px;top:402px;width:1288px;height:52px;background:#e6f4ff;border-bottom:1px solid #e2f0fc"></div>
<svg class="a" style="left:196px;top:421.0px" width="15" height="15" viewBox="0 0 15 15"><rect x="0" y="0" width="15" height="15" rx="3.5" fill="#1677ff"/><path d="M3.6 7.9 L6.2 10.6 L11.2 5.2" fill="none" stroke="#fff" stroke-width="1.4"/></svg>
<div class="t" style="left:182px;width:300px;text-align:center;top:421.5px;font-size:13px;color:#1f1f1f;font-weight:normal">物联网</div>
<div class="t" style="left:410.6px;width:300px;text-align:center;top:421.5px;font-size:13px;color:#1f1f1f;font-weight:normal">网页应用</div>
<div class="t" style="left:643px;width:300px;text-align:center;top:421.5px;font-size:13px;color:#1f1f1f;font-weight:normal">things</div>
<div class="t" style="left:929.8px;width:300px;text-align:center;top:421.5px;font-size:13px;color:#1f1f1f;font-weight:normal">/app/things</div>
<div class="a" style="left:188px;top:454px;width:1288px;height:51px;background:#e6f4ff;border-bottom:1px solid #e2f0fc"></div>
<svg class="a" style="left:196px;top:472.5px" width="15" height="15" viewBox="0 0 15 15"><rect x="0" y="0" width="15" height="15" rx="3.5" fill="#1677ff"/><path d="M3.6 7.9 L6.2 10.6 L11.2 5.2" fill="none" stroke="#fff" stroke-width="1.4"/></svg>
<div class="t" style="left:182px;width:300px;text-align:center;top:473.0px;font-size:13px;color:#1f1f1f;font-weight:normal">系统管理</div>
<div class="t" style="left:410.6px;width:300px;text-align:center;top:473.0px;font-size:13px;color:#1f1f1f;font-weight:normal">网页应用</div>
<div class="t" style="left:643px;width:300px;text-align:center;top:473.0px;font-size:13px;color:#1f1f1f;font-weight:normal">system</div>
<div class="a" style="left:188px;top:505px;width:1288px;height:51px;background:#e6f4ff;border-bottom:1px solid #e2f0fc"></div>
<svg class="a" style="left:196px;top:523.5px" width="15" height="15" viewBox="0 0 15 15"><rect x="0" y="0" width="15" height="15" rx="3.5" fill="#1677ff"/><path d="M3.6 7.9 L6.2 10.6 L11.2 5.2" fill="none" stroke="#fff" stroke-width="1.4"/></svg>
<div class="t" style="left:182px;width:300px;text-align:center;top:524.0px;font-size:13px;color:#1f1f1f;font-weight:normal">我的物联</div>
<div class="t" style="left:410.6px;width:300px;text-align:center;top:524.0px;font-size:13px;color:#1f1f1f;font-weight:normal">网页应用</div>
<div class="t" style="left:643px;width:300px;text-align:center;top:524.0px;font-size:13px;color:#1f1f1f;font-weight:normal">myThings</div>
<div class="t" style="left:929.8px;width:300px;text-align:center;top:524.0px;font-size:13px;color:#1f1f1f;font-weight:normal">/app/my-things</div>
<div class="a" style="left:188px;top:556px;width:1288px;height:53px;background:#e6f4ff;border-bottom:1px solid #e2f0fc"></div>
<svg class="a" style="left:196px;top:575.5px" width="15" height="15" viewBox="0 0 15 15"><rect x="0" y="0" width="15" height="15" rx="3.5" fill="#1677ff"/><path d="M3.6 7.9 L6.2 10.6 L11.2 5.2" fill="none" stroke="#fff" stroke-width="1.4"/></svg>
<div class="t" style="left:182px;width:300px;text-align:center;top:576.0px;font-size:13px;color:#1f1f1f;font-weight:normal">运营管理</div>
<div class="t" style="left:410.6px;width:300px;text-align:center;top:576.0px;font-size:13px;color:#1f1f1f;font-weight:normal">网页应用</div>
<div class="t" style="left:643px;width:300px;text-align:center;top:576.0px;font-size:13px;color:#1f1f1f;font-weight:normal">sale</div>
<div class="t" style="left:929.8px;width:300px;text-align:center;top:576.0px;font-size:13px;color:#1f1f1f;font-weight:normal">/app/sale</div>
<svg class="a" style="left:1382px;top:634px" width="8" height="11" viewBox="0 0 8 11"><path d="M6 1 L1.5 5.5 L6 10" fill="none" stroke="#bfbfbf" stroke-width="1.1"/></svg>
<div class="a" style="left:1408px;top:625px;width:30px;height:32px;border:1px solid #1677ff;border-radius:6px"></div>
<div class="t" style="left:1273px;width:300px;text-align:center;top:633.5px;font-size:13px;color:#1677ff;font-weight:normal">1</div>
<svg class="a" style="left:1457px;top:634px" width="8" height="11" viewBox="0 0 8 11"><path d="M2 1 L6.5 5.5 L2 10" fill="none" stroke="#bfbfbf" stroke-width="1.1"/></svg>
<div class="a" style="left:1477px;top:0px;width:21px;height:653px;background:#f1f1f1"></div>
<div class="a" style="left:1479px;top:21px;width:17px;height:595px;background:#c1c1c1"></div>
<svg class="a" style="left:1483px;top:8px" width="10" height="6" viewBox="0 0 10 6"><path d="M0.5 5.5 L5 0.5 L9.5 5.5 Z" fill="#a3a3a3"/></svg>
<svg class="a" style="left:1483px;top:639px" width="10" height="6" viewBox="0 0 10 6"><path d="M0.5 0.5 L5 5.5 L9.5 0.5 Z" fill="#505050"/></svg>
</div>
</body></html>
